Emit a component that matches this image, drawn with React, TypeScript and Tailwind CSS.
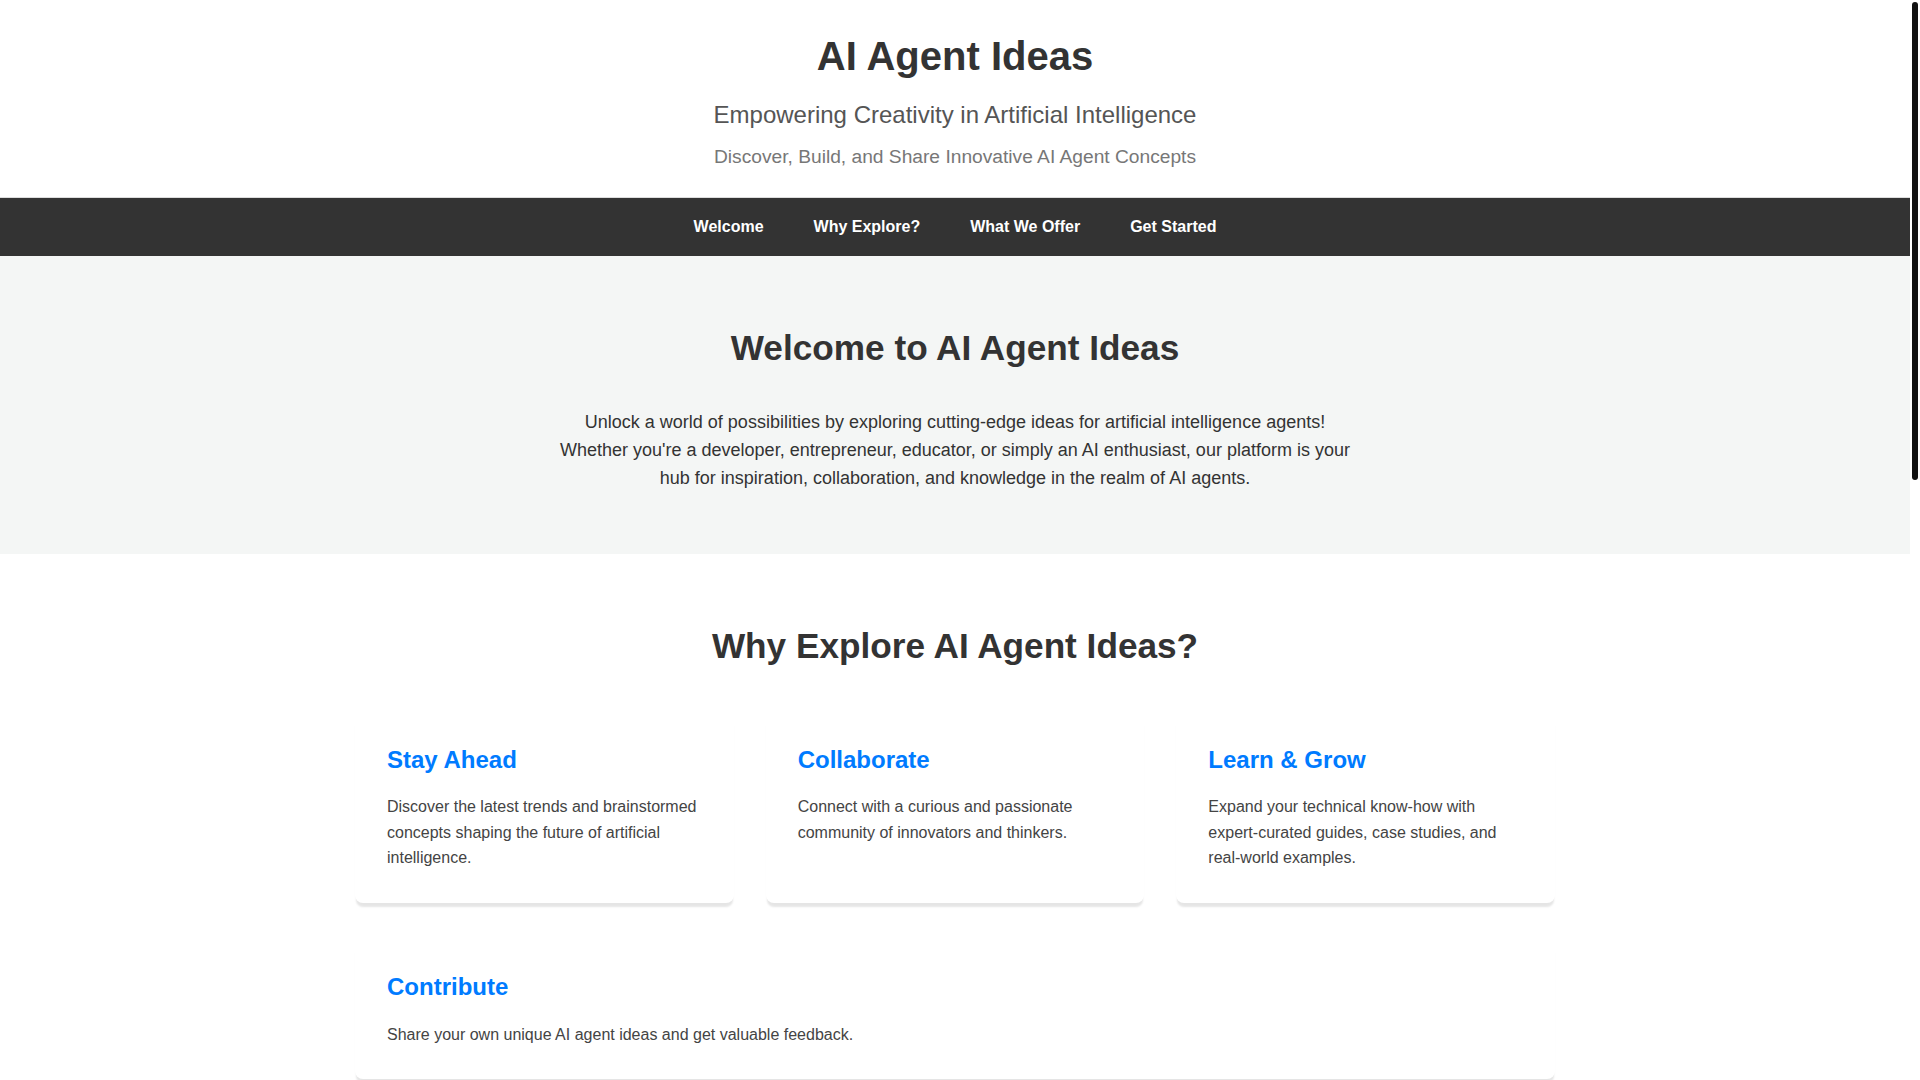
const NAV_LINKS = [
  { href: "#welcome", label: "Welcome" },
  { href: "#why-explore", label: "Why Explore?" },
  { href: "#what-we-offer", label: "What We Offer" },
  { href: "#get-started", label: "Get Started" },
];

const REASONS = [
  {
    title: "Stay Ahead",
    body: "Discover the latest trends and brainstormed concepts shaping the future of artificial intelligence.",
  },
  {
    title: "Collaborate",
    body: "Connect with a curious and passionate community of innovators and thinkers.",
  },
  {
    title: "Learn & Grow",
    body: "Expand your technical know-how with expert-curated guides, case studies, and real-world examples.",
  },
  {
    title: "Contribute",
    body: "Share your own unique AI agent ideas and get valuable feedback.",
  },
];

const OFFERS = [
  {
    title: "Idea Library",
    body: "Browse a growing collection of AI agent concepts, organised by industry, complexity and use case.",
  },
  {
    title: "Build Guides",
    body: "Step-by-step tutorials that take an idea from a rough sketch to a working prototype.",
  },
  {
    title: "Community Forum",
    body: "Ask questions, swap feedback and team up with other builders on new projects.",
  },
  {
    title: "Showcase",
    body: "Publish your finished agents and see what others have created with the same tools.",
  },
];

function SiteHeader() {
  return (
    <header className="border-b border-[#dddddd] bg-white pt-[33px] pb-[29px] text-center">
      <h1 className="text-[40px] leading-[1.15] font-bold text-[#333333]">
        AI Agent Ideas
      </h1>
      <p className="mt-[22px] text-[24px] leading-[1.15] text-[#555555]">
        Empowering Creativity in Artificial Intelligence
      </p>
      <p className="mt-[17px] text-[19.2px] leading-[1.15] text-[#777777]">
        Discover, Build, and Share Innovative AI Agent Concepts
      </p>
    </header>
  );
}

function SiteNav() {
  return (
    <nav className="bg-[#333333]">
      <ul className="flex justify-center gap-[50px] py-5 text-base leading-[1.15]">
        {NAV_LINKS.map((link) => (
          <li key={link.href}>
            <a href={link.href} className="font-bold text-white">
              {link.label}
            </a>
          </li>
        ))}
      </ul>
    </nav>
  );
}

function SectionHeading({ children }: { children: React.ReactNode }) {
  return (
    <h2 className="text-center text-[35.2px] leading-[1.15] font-bold text-[#333333]">
      {children}
    </h2>
  );
}

function Card({
  title,
  body,
  className = "",
}: {
  title: string;
  body: string;
  className?: string;
}) {
  return (
    <div
      className={`rounded-lg bg-white p-8 shadow-[0_5px_2px_-1px_rgba(0,0,0,0.1)] ${className}`}
    >
      <h3 className="mb-[21px] text-2xl leading-[1.15] font-bold text-[#007bff]">
        {title}
      </h3>
      <p className="text-base leading-[1.6] text-[#444444]">{body}</p>
    </div>
  );
}

// thin scroll rail on the right, like the page's own scrollbar
function ScrollRail() {
  return (
    <div className="w-[10px] shrink-0 bg-white p-[2px]" aria-hidden="true">
      <div className="h-[478px] rounded-full bg-[#111111]" />
    </div>
  );
}

export default function App() {
  return (
    <div className="flex h-screen bg-white font-['Liberation_Sans',Arial,sans-serif] text-[#333333]">
      <div className="min-w-0 flex-1 overflow-y-auto [scrollbar-width:none]">
        <SiteHeader />
        <SiteNav />

        <main>
          <section id="welcome" className="bg-[#f4f6f5] pt-[72px] pb-[62px]">
            <SectionHeading>Welcome to AI Agent Ideas</SectionHeading>
            <p className="mx-auto mt-[39px] max-w-[800px] text-center text-[18px] leading-[28.2px] text-[#333333]">
              Unlock a world of possibilities by exploring cutting-edge ideas
              for artificial intelligence agents! Whether you're a developer,
              entrepreneur, educator, or simply an AI enthusiast, our platform
              is your hub for inspiration, collaboration, and knowledge in the
              realm of AI agents.
            </p>
          </section>

          <section id="why-explore" className="bg-white pt-[72px] pb-16">
            <SectionHeading>Why Explore AI Agent Ideas?</SectionHeading>
            <div className="mx-auto mt-[47px] flex max-w-[1200px] flex-wrap gap-x-8 gap-y-[38px]">
              {REASONS.map((r) => (
                <Card
                  key={r.title}
                  title={r.title}
                  body={r.body}
                  className="flex-[1_1_340px]"
                />
              ))}
            </div>
          </section>

          <section id="what-we-offer" className="bg-[#f4f6f5] pt-[72px] pb-16">
            <SectionHeading>What We Offer</SectionHeading>
            <div className="mx-auto mt-[47px] grid max-w-[1200px] grid-cols-2 gap-8">
              {OFFERS.map((o) => (
                <Card key={o.title} title={o.title} body={o.body} />
              ))}
            </div>
            <p className="mx-auto mt-16 max-w-[800px] text-center text-[18px] leading-[28.2px]">
              Every resource is free to read, and new material is added each
              week by our editors and contributors.
            </p>
          </section>

          <section id="get-started" className="bg-white pt-[72px] pb-24">
            <SectionHeading>Get Started</SectionHeading>
            <p className="mx-auto mt-10 max-w-[800px] text-center text-[18px] leading-[28.2px]">
              Ready to dive in? Create a free account, browse the idea library,
              and share your first AI agent concept with the community today.
            </p>
            <div className="mt-10 flex justify-center">
              <a
                href="#welcome"
                className="rounded-md bg-[#007bff] px-8 py-4 text-lg font-bold text-white"
              >
                Join the Community
              </a>
            </div>
          </section>
        </main>

        <footer className="bg-[#333333] py-16 text-center text-[#dddddd]">
          <p className="text-base">
            &copy; 2024 AI Agent Ideas. All rights reserved.
          </p>
          <p className="mt-4 text-sm text-[#aaaaaa]">
            Built for dreamers, tinkerers and builders of intelligent agents.
          </p>
        </footer>
      </div>
      <ScrollRail />
    </div>
  );
}
